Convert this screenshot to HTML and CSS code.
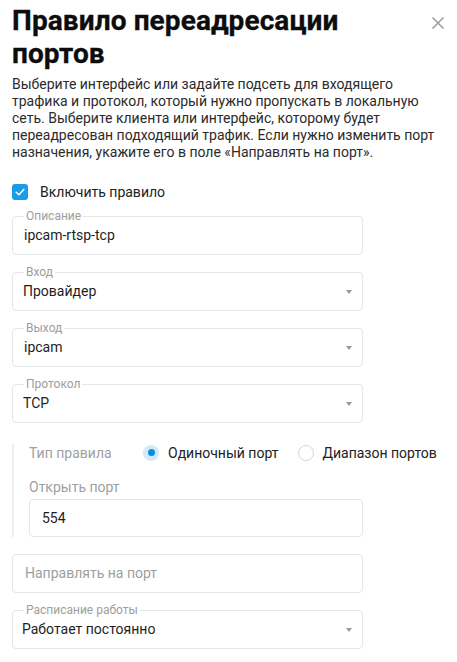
FILE: index.html
```html
<!DOCTYPE html>
<html lang="ru">
<head>
<meta charset="utf-8">
<title>Правило переадресации портов</title>
<link rel="stylesheet" href="styles.css">
</head>
<body>
<div class="dialog">
  <header class="head">
    <h1 class="title">Правило переадресации портов</h1>
    <button class="close" type="button" aria-label="Закрыть">
      <svg width="14" height="14" viewBox="0 0 14 14"><path d="M1.5 1.5 L12.5 12.5 M12.5 1.5 L1.5 12.5" stroke="#9aa0a4" stroke-width="1.6" fill="none"/></svg>
    </button>
  </header>
  <p class="desc">Выберите интерфейс или задайте подсеть для входящего трафика и протокол, который нужно пропускать в локальную сеть. Выберите клиента или интерфейс, которому будет переадресован подходящий трафик. Если нужно изменить порт назначения, укажите его в поле «Направлять на порт».</p>

  <label class="check">
    <span class="check-box">
      <svg width="16" height="16" viewBox="0 0 16 16"><path d="M4.2 8.2 L6.9 10.8 L11.8 5.4" stroke="#fff" stroke-width="1.5" fill="none" stroke-linecap="round" stroke-linejoin="round"/></svg>
    </span>
    <span class="check-label">Включить правило</span>
  </label>

  <div class="fields">
    <fieldset class="field">
      <legend class="legend">Описание</legend>
      <div class="value">ipcam-rtsp-tcp</div>
    </fieldset>
    <fieldset class="field">
      <legend class="legend">Вход</legend>
      <div class="value select"><span class="val-text left">Провайдер</span><span class="arrow"></span></div>
    </fieldset>
    <fieldset class="field">
      <legend class="legend">Выход</legend>
      <div class="value select"><span class="val-text">ipcam</span><span class="arrow"></span></div>
    </fieldset>
    <fieldset class="field">
      <legend class="legend">Протокол</legend>
      <div class="value select"><span class="val-text left">TCP</span><span class="arrow"></span></div>
    </fieldset>
  </div>

  <section class="ports">
    <div class="type-row">
      <span class="type-label">Тип правила</span>
      <span class="radio-item"><span class="radio on"></span><span class="radio-text">Одиночный порт</span></span>
      <span class="radio-item second"><span class="radio"></span><span class="radio-text">Диапазон портов</span></span>
    </div>
    <div class="open-label">Открыть порт</div>
    <div class="input port-input">554</div>
  </section>

  <div class="fields lower">
    <div class="input placeholder">Направлять на порт</div>
    <fieldset class="field">
      <legend class="legend">Расписание работы</legend>
      <div class="value select"><span class="val-text left2">Работает постоянно</span><span class="arrow"></span></div>
    </fieldset>
  </div>
</div>
</body>
</html>
```
FILE: styles.css
```css
* { box-sizing: border-box; }
html, body { margin: 0; padding: 0; background: #fff; }
body {
  font-family: Roboto, "Noto Sans", "Liberation Sans", sans-serif;
  color: #222;
  width: 457px;
  height: 662px;
  overflow: hidden;
}
.dialog {
  padding: 4px 12px 0 12px;
}
.head {
  display: flex;
  align-items: flex-start;
  justify-content: space-between;
}
.title {
  margin: 0;
  font-size: 28px;
  line-height: 33px;
  font-weight: 700;
  color: #0d0d0d;
  max-width: 380px;
  letter-spacing: 0.1px;
  -webkit-text-stroke: 0.3px #0d0d0d;
}
.close {
  border: 0;
  background: none;
  padding: 0;
  margin: 12px 0 0 0;
  width: 14px;
  height: 14px;
  display: flex;
  cursor: pointer;
}
.desc {
  margin: 6px 0 0 0;
  font-size: 14px;
  line-height: 17px;
  color: #2b2b2b;
}
.check {
  display: flex;
  align-items: center;
  gap: 12px;
  margin-top: 22px;
  height: 18px;
}
.check-box {
  width: 16px;
  height: 16px;
  border-radius: 3px;
  background: #1b9ce6;
  display: flex;
}
.check-label {
  font-size: 14px;
  color: #222;
}
.fields {
  width: 351px;
  display: flex;
  flex-direction: column;
  gap: 10.5px;
  margin-top: 8px;
}
.field {
  margin: 0;
  border: 1px solid #e6e6e6;
  border-radius: 4px;
  padding: 4px 11px 9.5px 11px;
  min-width: 0;
}
.legend {
  font-size: 12px;
  line-height: 14px;
  color: #9e9e9e;
  padding: 0 2px;
}
.value {
  font-size: 14px;
  line-height: 17px;
  color: #1e1e1e;
  height: 17px;
}
.select {
  display: flex;
  align-items: center;
  justify-content: space-between;
}
.val-text.left { margin-left: -1px; }
.val-text.left2 { margin-left: -2px; }
.arrow {
  width: 0;
  height: 0;
  border-left: 3px solid transparent;
  border-right: 3px solid transparent;
  border-top: 4px solid #9a9a9a;
  margin-right: -1px;
  margin-top: 1px;
}
.ports {
  width: 351px;
  margin-top: 21px;
  border-left: 2px solid #ededed;
  padding-left: 15px;
}
.type-row {
  display: flex;
  align-items: center;
  height: 18px;
  font-size: 14px;
  white-space: nowrap;
}
.type-label {
  flex: none;
  width: 114px;
  color: #a0a0a0;
}
.radio-item {
  flex: none;
  display: flex;
  align-items: center;
  gap: 9px;
  color: #222;
  white-space: nowrap;
}
.radio-item.second {
  margin-left: 20px;
  gap: 8px;
}
.radio {
  width: 16px;
  height: 16px;
  border-radius: 50%;
  border: 1px solid #d6d6d6;
  background: #fff;
  display: flex;
  align-items: center;
  justify-content: center;
  flex: none;
}
.radio.on {
  border: 0;
  background: #d5eaf8;
}
.radio.on::after {
  content: "";
  width: 7px;
  height: 7px;
  border-radius: 50%;
  background: #0d8de2;
}
.open-label {
  margin-top: 17px;
  font-size: 14px;
  line-height: 17px;
  color: #a0a0a0;
}
.input {
  border: 1px solid #e6e6e6;
  border-radius: 4px;
  height: 38.5px;
  display: flex;
  align-items: center;
  font-size: 14px;
  color: #1e1e1e;
}
.port-input {
  margin-top: 3px;
  padding-left: 12px;
}
.lower {
  margin-top: 17px;
}
.placeholder {
  color: #9e9e9e;
  padding-left: 12px;
}
```
